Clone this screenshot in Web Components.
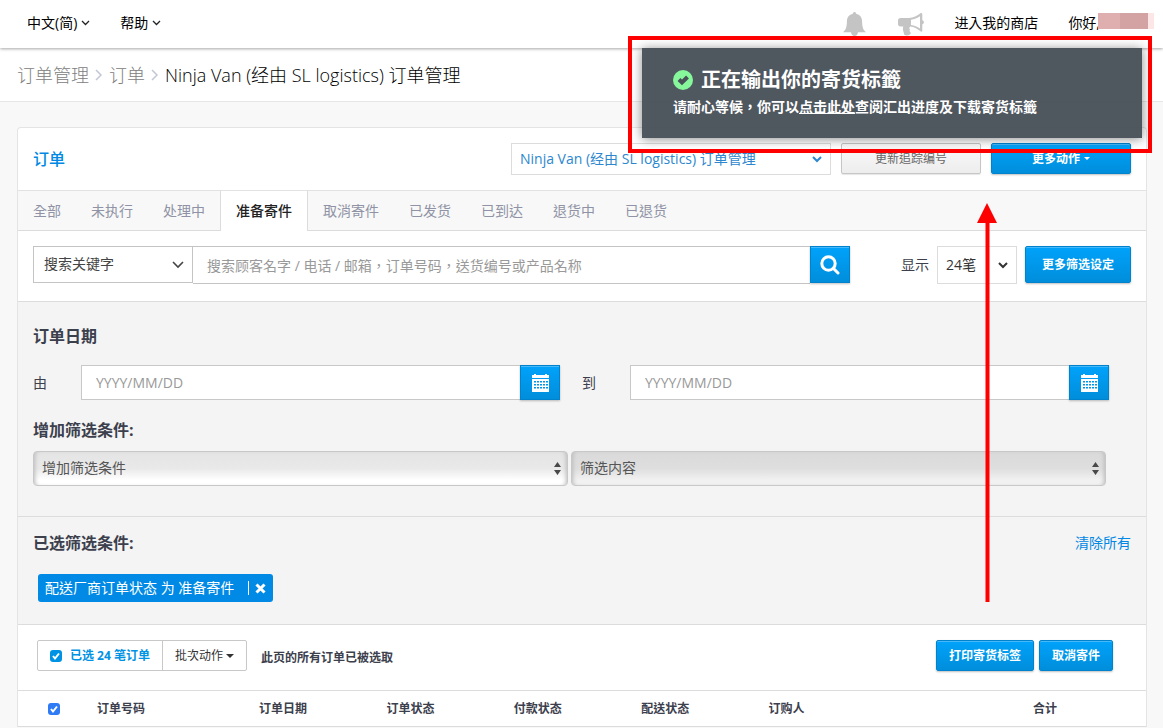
<!DOCTYPE html>
<html lang="zh-Hant">
<head>
  <meta charset="utf-8">
  <meta name="viewport" content="width=device-width, initial-scale=1">
  <title>订单管理</title>
  <style>
    body {
      margin: 0;
      min-height: 100vh;
      overflow: hidden;
      background: #f8f8f8;
      color: #3c404d;
      font: 14px/20px "Open Sans", "Noto Sans CJK TC", sans-serif;
      --blue: #0088e4;
      --line: #dcdcdc;
    }
  </style>
</head>
<body>
  <order-app></order-app>

  <script>
    // Attach an open shadow root and fill it
    function render(el, html) {
      el.attachShadow({ mode: "open" }).innerHTML =
        `<style>*, :host { box-sizing: border-box; } a { text-decoration: none; color: inherit; }</style>` + html;
    }

    class UiButton extends HTMLElement {
      connectedCallback() {
        const label = this.getAttribute("label");
        render(this, `
          <style>
            :host { display: block; height: 31px; }
            button {
              display: flex;
              align-items: center;
              justify-content: center;
              gap: 4px;
              width: 100%;
              height: 100%;
              padding: 0 12px;
              border: 1px solid #0083cc;
              border-radius: 2px;
              background: linear-gradient(#00a2fb, #008edb);
              box-shadow: inset 0 1px #47b9fb, 0 1px 2px rgba(0, 0, 0, .25);
              color: #fff;
              font: bold 12px/20px "Open Sans", "Noto Sans CJK TC", sans-serif;
              white-space: nowrap;
            }
            :host([kind="gray"]) button {
              border-color: #c6c6c6;
              background: linear-gradient(#fafafa, #ededed);
              box-shadow: 0 1px 1px rgba(0, 0, 0, .1);
              color: #666;
              font-weight: normal;
            }
            :host([kind="square"]) button {
              padding: 0;
              border-radius: 0;
            }
          </style>
          <button type="button" ${label ? `aria-label="${label}"` : ""}><slot></slot></button>
        `);
      }
    }
    customElements.define("ui-button", UiButton);

    class UiSelect extends HTMLElement {
      connectedCallback() {
        const kind = this.getAttribute("kind");
        const arrow = kind === "glossy"
          ? `<svg width="7" height="13" viewBox="0 0 7 13" fill="#484848"><path d="M0 5 3.500 0 7 5zM0 8h7L3.500 13z"/></svg>`
          : kind === "thin"
            ? `<svg width="12" height="8" viewBox="0 0 12 8" fill="none" stroke="#444" stroke-width="1.600"><path d="m1 1 5 5 5-5"/></svg>`
            : `<svg width="10" height="7" viewBox="0 0 10 7" fill="none" stroke="currentColor" stroke-width="2"><path d="m1 1 4 4 4-4"/></svg>`;
        render(this, `
          <style>
            :host { display: grid; align-items: center; height: 32px; color: #333; }
            select, svg { grid-area: 1 / 1; }
            select {
              appearance: none;
              width: 100%;
              height: 100%;
              padding: 0 24px 0 8px;
              border: 1px solid var(--line);
              border-radius: 0;
              background: #fff;
              color: inherit;
              font: 14px/20px "Open Sans", "Noto Sans CJK TC", sans-serif;
            }
            svg {
              justify-self: end;
              margin-right: 9px;
              pointer-events: none;
            }
            :host([kind="thin"]) select { border-color: #c4c4c4; padding: 0 24px 2px 10px; color: #444; }
            :host([kind="glossy"]) select {
              padding-bottom: 2px;
              border-color: #c8c8c8;
              border-radius: 4px;
              background: linear-gradient(#e4e4e4, #e9e9e9 50%, #fff 85%);
              box-shadow: inset 4px 0 4px -3px #bbb, inset -4px 0 4px -3px #bbb;
              color: #555;
            }
            :host([kind="glossy"]) svg { margin-right: 7px; }
            :host([dim]) select {
              background: linear-gradient(#dadada, #dedede 50%, #f1f1f1 85%);
            }
          </style>
          <select aria-label="${this.getAttribute("label")}"><option>${this.getAttribute("value")}</option></select>
          ${arrow}
        `);
      }
    }
    customElements.define("ui-select", UiSelect);

    class UiCheck extends HTMLElement {
      connectedCallback() {
        render(this, `
          <style>
            :host { display: block; width: 12px; height: 12px; --fill: #0092e4; }
            :host([native]) { --fill: #2f7bf6; }
            span { display: grid; }
            input, svg { grid-area: 1 / 1; }
            input {
              appearance: none;
              width: 12px;
              height: 12px;
              margin: 0;
              border-radius: 3px;
              background: var(--fill);
            }
            svg { pointer-events: none; }
          </style>
          <span>
            <input type="checkbox" aria-label="${this.getAttribute("label")}" checked>
            <svg width="12" height="12" viewBox="0 0 12 12" fill="none" stroke="#fff" stroke-width="2"><path d="m3 6 2 2.500L9 3.500"/></svg>
          </span>
        `);
      }
    }
    customElements.define("ui-check", UiCheck);

    class DateField extends HTMLElement {
      connectedCallback() {
        render(this, `
          <style>
            :host { display: flex; align-items: center; padding-right: 22px; }
            label { width: 48px; }
            input {
              flex: 1;
              min-width: 0;
              height: 35px;
              padding: 0 14px;
              border: 1px solid #c8c8c8;
              border-right: 0;
              border-radius: 0;
              background: #fff;
              font: 14px/20px "Open Sans", "Noto Sans CJK TC", sans-serif;
            }
            input::placeholder { color: #999; }
            ui-button { width: 40px; height: 35px; }
          </style>
          <label for="date"><slot></slot></label>
          <input id="date" type="text" placeholder="YYYY/MM/DD">
          <ui-button kind="square" label="日历">
            <svg width="17" height="19" viewBox="0 0 17 19">
              <path fill="#fff" d="M0 2h2V1h2v1h9V1h2v1h2v3H0zM0 6h17v13H0z"/>
              <path stroke="#0096e8" stroke-width="1" stroke-dasharray="2 1" d="M2 8.500h14M2 11.500h14M2 14.500h14"/>
              <path stroke="#0096e8" stroke-width="1" stroke-dasharray="2 1" stroke-opacity=".5" d="M2 9.500h14M2 12.500h14M2 15.500h14"/>
            </svg>
          </ui-button>
        `);
      }
    }
    customElements.define("date-field", DateField);

    class AppHeader extends HTMLElement {
      connectedCallback() {
        const caret = `<svg width="9" height="6" viewBox="0 0 9 6" fill="none" stroke="#222" stroke-width="1.300"><path d="m1 1 3.500 3.500L8 1"/></svg>`;
        render(this, `
          <style>
            :host {
              display: block;
              position: relative;
              background: #fff;
              color: #000;
              box-shadow: 0 1px 3px rgba(0, 0, 0, .35);
            }
            nav {
              display: flex;
              align-items: center;
              height: 48px;
              padding: 0 9px 2px 27px;
            }
            .menu { display: flex; align-items: center; gap: 4px; margin-right: 30px; }
            .bell { margin: 2px 32px 0 auto; }
            .horn { margin: 2px 30px 0 0; }
            .shop { margin-right: 30px; }
            .user { display: flex; align-items: center; }
            .name {
              width: 56px;
              height: 16px;
              margin: 0 0 4px -2px;
              background: linear-gradient(90deg, #dfaeae 22px, #d3a2a2 22px 50px, #fde6e6 50px);
            }
          </style>
          <nav>
            <a class="menu" href="#">中文(简) ${caret}</a>
            <a class="menu" href="#">帮助 ${caret}</a>
            <svg class="bell" width="23" height="24" viewBox="0 0 23 24" fill="#c4c4c4">
              <path d="M11.500 0c1 0 1.700.8 1.600 1.800 3.800.8 5.900 3.600 6 7.600.1 5.300.9 8.200 3.900 10.900H0c3-2.700 3.800-5.600 3.900-10.900.1-4 2.200-6.800 6-7.600C9.800.8 10.500 0 11.500 0zM8 20h7c-.2 2.600-1.600 4-3.500 4S8.200 22.600 8 20z"/>
            </svg>
            <svg class="horn" width="26" height="23" viewBox="0 0 26 23" fill="#c4c4c4">
              <path fill-rule="evenodd" d="M2.500 5H11C15.500 4.600 19.200 2.900 22.500.2c1-.6 1.800-.1 1.800 1v6c2.100.4 2.100 3.600 0 4v6.200c0 1.200-.9 1.600-1.800.9-3.300-2.700-6.500-4.200-10.100-4.700-1.500.8-1.300 2.200-.3 3.200-1 .9-.5 2 .8 3.200-1 2.700-4.700 3.100-6.600 1.700-.8-3-2-5.200-1-8.200H2.500C1 13.500 0 12.500 0 11V7.500C0 6 1 5 2.500 5zM13 6.800v5.100c3.400.5 6.300 1.700 9 3.600V3.200c-2.700 1.900-5.600 3.100-9 3.600z"/>
            </svg>
            <a class="shop" href="#">进入我的商店</a>
            <span class="user">你好,<span class="name"></span></span>
          </nav>
        `);
      }
    }
    customElements.define("app-header", AppHeader);

    class PageCrumbs extends HTMLElement {
      connectedCallback() {
        const sep = `<svg width="8" height="12" viewBox="0 0 8 12" fill="none" stroke="#c2c8d6" stroke-width="1.500"><path d="m1 1 5 5-5 5"/></svg>`;
        render(this, `
          <style>
            :host { display: block; border-bottom: 1px solid #e6e6e6; background: #fff; }
            nav {
              display: flex;
              align-items: center;
              gap: 6px;
              height: 53px;
              padding: 0 17px;
              color: #000;
              font-size: 18px;
              font-weight: 300;
              line-height: 24px;
            }
            a { color: #808080; }
          </style>
          <nav>
            <a href="#">订单管理</a>${sep}<a href="#">订单</a>${sep}
            <span>Ninja Van (经由 SL logistics) 订单管理</span>
          </nav>
        `);
      }
    }
    customElements.define("page-crumbs", PageCrumbs);

    class TabBar extends HTMLElement {
      connectedCallback() {
        const tabs = ["全部", "未执行", "处理中", "准备寄件", "取消寄件", "已发货", "已到达", "退货中", "已退货"];
        render(this, `
          <style>
            :host { display: block; border-top: 1px solid #e2e2e2; background: #f8f8f8; }
            nav { display: flex; box-shadow: inset 0 -1px var(--line); }
            a { height: 40px; padding: 10px 15px; color: #8f93a5; }
            a.on {
              border: solid var(--line);
              border-width: 0 1px;
              background: #fff;
              color: #222;
              font-weight: 500;
            }
          </style>
          <nav>${tabs.map((t) => `<a href="#"${t === "准备寄件" ? ' class="on" aria-current="page"' : ""}>${t}</a>`).join("")}</nav>
        `);
      }
    }
    customElements.define("tab-bar", TabBar);

    class SearchRow extends HTMLElement {
      connectedCallback() {
        render(this, `
          <style>
            :host { display: flex; align-items: flex-start; padding: 15px 15px 17px; border-bottom: 1px solid var(--line); }
            form { display: flex; flex: 1; align-items: flex-start; margin-right: 51px; }
            form ui-select { width: 160px; height: 37px; }
            input {
              flex: 1;
              min-width: 0;
              height: 38px;
              padding: 0 14px;
              border: solid #c4c4c4;
              border-width: 1px 0;
              border-radius: 0;
              font: 14px/20px "Open Sans", "Noto Sans CJK TC", sans-serif;
            }
            input::placeholder { color: #999; }
            form ui-button { width: 40px; height: 37px; }
            .show { margin: 9px 8px 0 0; }
            .count { width: 80px; height: 38px; margin-right: 8px; }
            .more { width: 106px; height: 37px; }
          </style>
          <form>
            <ui-select kind="thin" label="搜索类型" value="搜索关键字"></ui-select>
            <input type="text" aria-label="搜索" placeholder="搜索顾客名字 / 电话 / 邮箱，订单号码，送货编号或产品名称">
            <ui-button kind="square" label="搜索">
              <svg width="20" height="20" viewBox="0 0 20 20" fill="none" stroke="#fff" stroke-width="3">
                <circle cx="8.500" cy="8.500" r="6.700"/><path stroke-linecap="round" d="m13.500 13.500 4.500 4.500"/>
              </svg>
            </ui-button>
          </form>
          <span class="show">显示</span>
          <ui-select class="count" label="显示" value="24笔"></ui-select>
          <ui-button class="more">更多筛选设定</ui-button>
        `);
      }
    }
    customElements.define("search-row", SearchRow);

    class FilterPanel extends HTMLElement {
      connectedCallback() {
        render(this, `
          <style>
            :host { display: block; background: #f4f4f4; }
            section { padding: 22px 15px 30px; border-bottom: 1px solid var(--line); }
            h2 { margin: 0; font-size: 16px; font-weight: bold; line-height: 24px; }
            .dates { display: grid; grid-template-columns: 1fr 1fr; margin: 17px 0 18px; }
            .add { display: grid; grid-template-columns: 1fr 1fr; gap: 3px; margin-top: 9px; padding-right: 25px; }
            .add ui-select { height: 35px; }
            .chosen { padding: 14px 15px 22px; }
            .top { display: flex; align-items: center; justify-content: space-between; }
            .top a { color: var(--blue); }
            .tag {
              display: inline-flex;
              align-items: center;
              height: 28px;
              margin: 19px 0 0 5px;
              padding: 0 7px;
              border-radius: 3px;
              background: #008ae6;
              color: #fff;
            }
            .tag button {
              display: flex;
              align-items: center;
              height: 14px;
              margin-left: 14px;
              padding: 0 0 0 6px;
              border: 0;
              border-left: 1px solid #fff;
              background: none;
            }
          </style>
          <section>
            <h2>订单日期</h2>
            <div class="dates">
              <date-field>由</date-field>
              <date-field>到</date-field>
            </div>
            <h2>增加筛选条件:</h2>
            <div class="add">
              <ui-select kind="glossy" label="增加筛选条件" value="增加筛选条件"></ui-select>
              <ui-select kind="glossy" dim label="筛选内容" value="筛选内容"></ui-select>
            </div>
          </section>
          <section class="chosen">
            <div class="top"><h2>已选筛选条件:</h2><a href="#">清除所有</a></div>
            <span class="tag">配送厂商订单状态 为 准备寄件
              <button type="button" aria-label="移除">
                <svg width="11" height="11" viewBox="0 0 11 11" stroke="#fff" stroke-width="3"><path d="m1.500 1.500 8 8m0-8-8 8"/></svg>
              </button>
            </span>
          </section>
        `);
      }
    }
    customElements.define("filter-panel", FilterPanel);

    class OrderTable extends HTMLElement {
      connectedCallback() {
        const cols = ["订单号码", "订单日期", "订单状态", "付款状态", "配送状态", "订购人"];
        render(this, `
          <style>
            :host { display: block; font-size: 12px; }
            .bar { display: flex; align-items: center; padding: 15px 33px 19px 19px; }
            .group { display: flex; height: 31px; border: 1px solid #c8c8c8; border-radius: 2px; }
            .picked { display: flex; align-items: center; gap: 8px; padding: 0 12px; color: #0092e4; font-weight: bold; }
            .batch {
              display: flex;
              align-items: center;
              gap: 3px;
              padding: 0 12px;
              border: 0;
              border-left: 1px solid #c8c8c8;
              background: none;
              color: #333;
              font: 12px/20px "Open Sans", "Noto Sans CJK TC", sans-serif;
            }
            p { flex: 1; margin: 4px 0 0 14px; font-weight: bold; }
            .cancel { margin-left: 5px; }
            table { width: 100%; border-collapse: collapse; table-layout: fixed; }
            th { height: 36px; padding: 0; border: solid var(--line); border-width: 1px 0; text-align: left; font-weight: bold; }
            th:first-child { width: 79px; padding-left: 30px; }
            th:nth-child(2) { width: 162px; }
            th:last-child { width: 250px; padding-right: 89px; text-align: right; }
          </style>
          <div class="bar">
            <div class="group">
              <span class="picked"><ui-check label="已选 24 笔订单"></ui-check>已选 24 笔订单</span>
              <button class="batch" type="button">批次动作
                <svg width="8" height="4" viewBox="0 0 8 4" fill="#333"><path d="M0 0h8L4 4z"/></svg>
              </button>
            </div>
            <p>此页的所有订单已被选取</p>
            <ui-button>打印寄货标签</ui-button>
            <ui-button class="cancel">取消寄件</ui-button>
          </div>
          <table>
            <thead>
              <tr>
                <th><ui-check native label="全选"></ui-check></th>
                ${cols.map((c) => `<th>${c}</th>`).join("")}
                <th>合计</th>
              </tr>
            </thead>
          </table>
        `);
      }
    }
    customElements.define("order-table", OrderTable);

    class ToastMessage extends HTMLElement {
      connectedCallback() {
        render(this, `
          <style>
            :host {
              display: block;
              width: 500px;
              height: 90px;
              padding: 20px 31px;
              background: rgba(72, 80, 88, .96);
              box-shadow: 0 1px 10px rgba(0, 0, 0, .45);
              color: #fff;
              font-weight: bold;
            }
            h1 { display: flex; align-items: center; gap: 8px; margin: 0 0 6px; font-size: 20px; line-height: 24px; }
            p { margin: 0; line-height: 18px; }
            a { text-decoration: underline; }
          </style>
          <h1>
            <svg width="20" height="20" viewBox="0 0 20 20"><circle cx="10" cy="10" r="10" fill="#87f79c"/><path fill="none" stroke="#485058" stroke-width="4" d="m6 9.500 3 3 5.500-5.500"/></svg>
            正在输出你的寄货标籤
          </h1>
          <p>请耐心等候，你可以<a href="#">点击此处</a>查阅汇出进度及下载寄货标籤</p>
        `);
      }
    }
    customElements.define("toast-message", ToastMessage);

    class OrderApp extends HTMLElement {
      connectedCallback() {
        render(this, `
          <style>
            :host { display: block; position: relative; }
            .panel {
              margin: 25px 16px 0 17px;
              border: 1px solid #e4e4e4;
              border-bottom: 0;
              border-radius: 4px 4px 0 0;
              background: #fff;
            }
            .head { display: flex; align-items: flex-start; gap: 10px; padding: 15px; }
            .head h2 { flex: 1; margin: 4px 0 0; color: var(--blue); font-size: 16px; font-weight: 500; line-height: 24px; }
            .head ui-select { width: 320px; color: #2d87cf; }
            .head ui-button { width: 140px; }
            /* things that float over the page */
            toast-message { position: absolute; top: 48px; right: 21px; }
            .frame { position: absolute; top: 36px; right: 11px; width: 524px; height: 117px; border: 4px solid #f00; pointer-events: none; }
            .arrow { position: absolute; top: 203px; right: 166px; pointer-events: none; }
          </style>
          <app-header></app-header>
          <page-crumbs></page-crumbs>
          <main class="panel">
            <div class="head">
              <h2>订单</h2>
              <ui-select label="配送方式" value="Ninja Van (经由 SL logistics) 订单管理"></ui-select>
              <ui-button kind="gray">更新追踪编号</ui-button>
              <ui-button>更多动作
                <svg width="6" height="3" viewBox="0 0 6 3" fill="#fff"><path d="M0 0h6L3 3z"/></svg>
              </ui-button>
            </div>
            <tab-bar></tab-bar>
            <search-row></search-row>
            <filter-panel></filter-panel>
            <order-table></order-table>
          </main>
          <toast-message></toast-message>
          <div class="frame"></div>
          <svg class="arrow" width="20" height="399" viewBox="0 0 20 399" fill="#f00"><path d="M10 0 20 20h-7.500v379h-4V20H0z"/></svg>
        `);
      }
    }
    customElements.define("order-app", OrderApp);
  </script>
</body>
</html>
